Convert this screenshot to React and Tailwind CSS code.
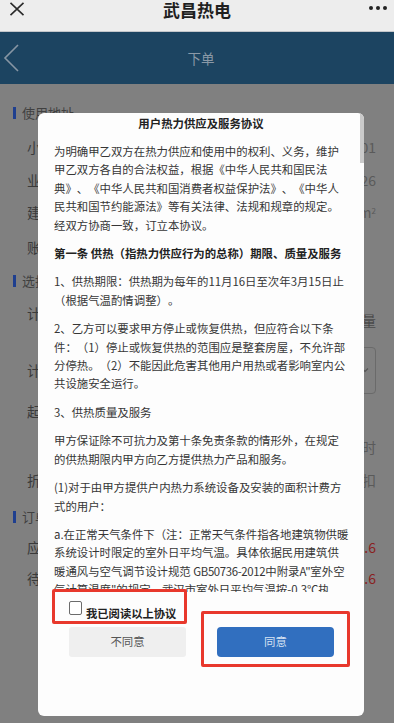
import { useState } from 'react';

const font = { fontFamily: '"Noto Sans CJK SC", "Noto Sans", sans-serif' };

function Section({ title, className }) {
  return (
    <div className={`flex items-center gap-[6px] pl-[13px] ${className}`}>
      <span className="block w-[3px] h-[12px] bg-[#1f3f8f]"></span>
      <span className="text-[13px] text-[#404040]">{title}</span>
    </div>
  );
}

function Row({ label, value, className, valueClass = 'text-[#5a5a5a]' }) {
  return (
    <div className={`flex items-center justify-between pl-[27px] pr-[18px] ${className}`}>
      <span className="text-[14px] text-[#3a3a3a]">{label}</span>
      <span className={`text-[14px] ${valueClass}`}>{value}</span>
    </div>
  );
}

function Agreement() {
  const [checked, setChecked] = useState(false);

  return (
    <div className="absolute left-[38px] top-[113px] w-[326px] h-[603px] bg-[#fdfdfd] rounded-[6px] overflow-hidden flex flex-col [text-spacing-trim:space-all]">
      {/* scroll thumb */}
      <div className="absolute right-0 top-0 w-[4px] h-[50px] bg-[#cacaca]"></div>

      <div className="pt-[1px] text-center text-[11.4px] leading-[18px] font-bold text-[#222]">用户热力供应及服务协议</div>

      <div className="h-[460px] overflow-hidden pt-[10px] pl-4 pr-[15px] text-[11.4px] leading-[18.4px] text-[#363636]">
        <p className="mb-[10px]">为明确甲乙双方在热力供应和使用中的权利、义务，维护甲乙双方各自的合法权益，根据《中华人民共和国民法典》、《中华人民共和国消费者权益保护法》、《中华人民共和国节约能源法》等有关法律、法规和规章的规定。经双方协商一致，订立本协议。</p>
        <p className="mb-[10px] font-bold text-[#222]">第一条 供热（指热力供应行为的总称）期限、质量及服务</p>
        <p className="mb-[10px]">1、供热期限：供热期为每年的11月16日至次年3月15日止（根据气温酌情调整）。</p>
        <p className="mb-[10px]">2、乙方可以要求甲方停止或恢复供热，但应符合以下条件：（1）停止或恢复供热的范围应是整套房屋，不允许部分停热。（2）不能因此危害其他用户用热或者影响室内公共设施安全运行。</p>
        <p className="mb-[10px]">3、供热质量及服务</p>
        <p className="mb-[10px]">甲方保证除不可抗力及第十条免责条款的情形外，在规定的供热期限内甲方向乙方提供热力产品和服务。</p>
        <p className="mb-[10px]">(1)对于由甲方提供户内热力系统设备及安装的面积计费方式的用户：</p>
        <p className="mb-[10px]">a.在正常天气条件下（注：正常天气条件指各地建筑物供暖系统设计时限定的室外日平均气温。具体依据民用建筑供暖通风与空气调节设计规范 <span className="tracking-[-0.35px]">GB50736-2012</span>中附录<span className="tracking-[-0.35px]">A"</span>室外空气计算温度"的规定。武汉市室外日平均气温按-0.3℃执行），甲方保证乙方卧室、起居室（厅）的室内温度不低于18℃。</p>
      </div>

      <div className="pl-[31px] pr-[30px]">
        <label className="mt-[9px] flex items-start cursor-pointer" onClick={() => setChecked(!checked)}>
          <span className={`block w-[13px] h-[14px] border border-[#6b6b6b] rounded-[2px] ${checked ? 'bg-[#316fbf]' : 'bg-white'}`}></span>
          <span className="ml-[4px] mt-[4px] text-[11.3px] leading-[16px] font-bold text-[#222]">我已阅读以上协议</span>
        </label>
        <div className="mt-[6px] flex justify-between">
          <button className="w-[117px] h-[30px] bg-[#efefef] rounded-[3px] text-[11.4px] text-[#555]">不同意</button>
          <button className="w-[117px] h-[30px] bg-[#316fbf] rounded-[4px] text-[11.4px] text-[#d6e2f2]">同意</button>
        </div>
      </div>

      {/* annotation boxes */}
      <div className="absolute left-[14px] top-[476px] w-[135px] h-[35px] border-[3px] border-[#e8382c] rounded-[2px]"></div>
      <div className="absolute left-[163px] top-[498px] w-[149px] h-[56px] border-[3px] border-[#e8382c] rounded-[2px]"></div>
    </div>
  );
}

export default function App() {
  return (
    <div className="relative w-[394px] h-[723px] overflow-hidden bg-[#808080]" style={font}>
      {/* wechat bar */}
      <div className="h-[32px] bg-[#ededed] border-b border-[#c3c6ca] flex items-start justify-between px-[9px]">
        <svg width="16" height="14" viewBox="0 0 16 14" className="mt-[2px]">
          <path d="M1.5 0.8 L14.5 13.2 M14.5 0.8 L1.5 13.2" stroke="#2a2a2a" strokeWidth="1.6" fill="none" />
        </svg>
        <div className="text-[17px] leading-[20px] font-bold text-[#1f1f1f]">武昌热电</div>
        <div className="flex gap-[3px] mt-[6px] mr-[-2px]">
          <span className="block w-[4px] h-[4px] rounded-full bg-[#222]"></span>
          <span className="block w-[4px] h-[4px] rounded-full bg-[#222]"></span>
          <span className="block w-[4px] h-[4px] rounded-full bg-[#222]"></span>
        </div>
      </div>

      {/* page header */}
      <div className="h-[52px] bg-[#1c4461] flex items-center">
        <svg width="18" height="30" viewBox="0 0 18 30" className="ml-[2px]">
          <path d="M16 2 L3 15 L16 28" stroke="#8796a4" strokeWidth="1.6" fill="none" />
        </svg>
        <div className="flex-1 text-center text-[13.5px] text-[#8a99a7] mr-[12px]">下单</div>
      </div>

      {/* form underneath */}
      <div className="pt-[14px]">
        <Section title="使用地址" className="h-[30px]" />
        <Row label="小区名称" value="1-1-101" className="h-[38px]" />
        <Row label="业主电话" value="138****0926" className="h-[28px]" />
        <Row label="建筑面积" value={<>89.5m<sup className="text-[8px]">2</sup></>} className="h-[36px]" />
        <Row label="账户余额" value="" className="h-[34px]" />
        <Section title="选择套餐" className="h-[34px]" />
        <div className="flex items-center justify-between pl-[27px] pr-[18px] h-[30px]">
          <span className="text-[14px] text-[#3a3a3a]">计费方式</span>
          <span className="text-[14px] text-[#4a4a4a] mt-[14px]">按热量</span>
        </div>
        <div className="mt-[22px] flex items-center justify-between pl-[27px] pr-[18px] h-[40px]">
          <span className="text-[14px] text-[#3a3a3a]">计量方式</span>
          <div className="w-[140px] h-[47px] shrink-0 border border-[#6a6a6a] rounded-[4px] flex items-center justify-end pr-[6px]">
            <svg width="8" height="6" viewBox="0 0 8 6">
              <path d="M1 1.5 L4 4.5 L7 1.5" stroke="#555" strokeWidth="1.2" fill="none" />
            </svg>
          </div>
        </div>
        <Row label="起始日期" value="" className="h-[42px]" />
        <Row label="" value="按日计时" className="h-[30px]" />
        <Row label="折扣" value="无折扣" className="h-[36px]" />
        <Section title="订单信息" className="h-[38px]" />
        <Row label="应付金额" value="¥2356.6" valueClass="text-[#8a1f1f]" className="h-[22px]" />
        <Row label="待付金额" value="¥2356.6" valueClass="text-[#8a1f1f]" className="h-[40px]" />
      </div>

      <Agreement />
    </div>
  );
}
